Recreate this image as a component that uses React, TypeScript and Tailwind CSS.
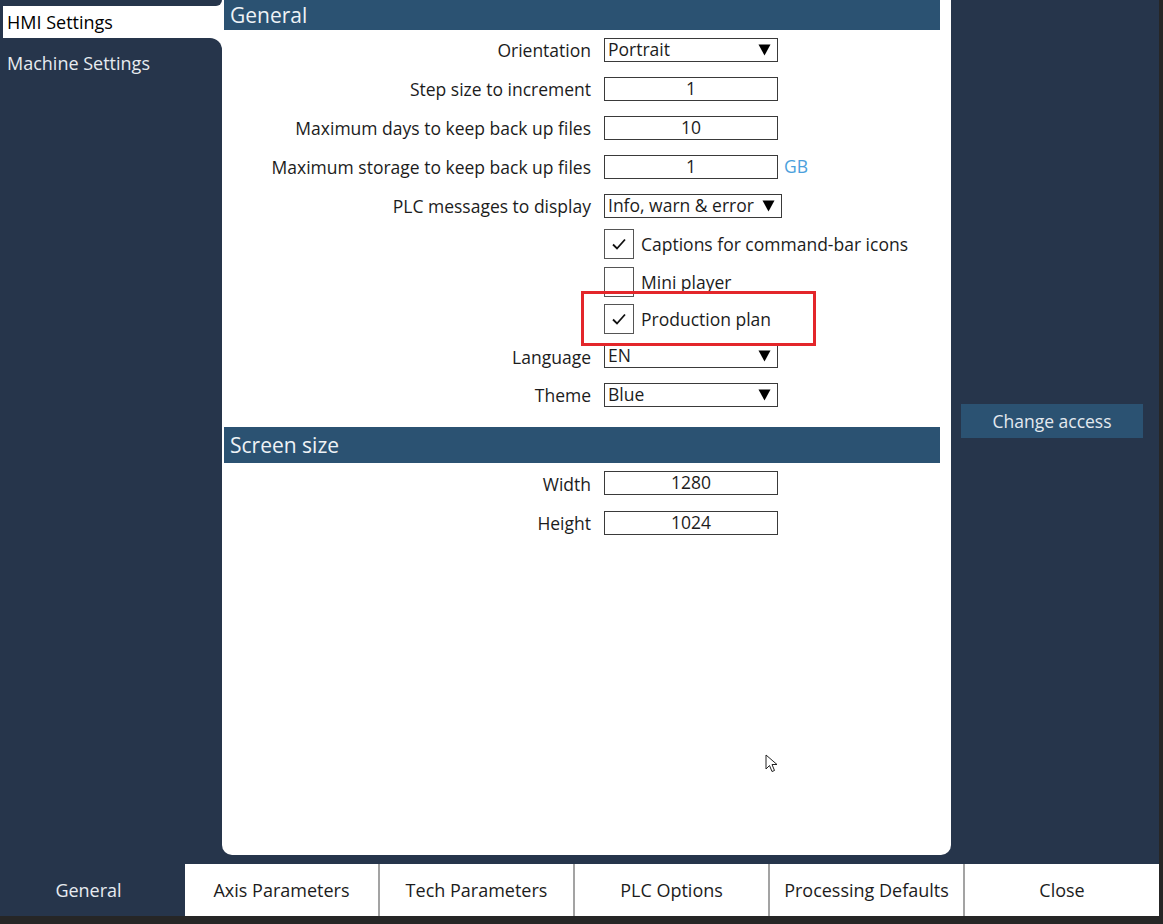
import React from 'react';

const FONT = "font-['Open_Sans',_'Noto_Sans',_sans-serif]";

const Arrow = () => (
  <svg width="13" height="12" viewBox="0 0 13 12">
    <path d="M0.5 0.5 L12.5 0.5 L6.5 11.5 Z" fill="#000" />
  </svg>
);

const Select: React.FC<{ value: string; wide?: boolean }> = ({ value, wide }) => (
  <div className={`flex items-center justify-between h-[24px] ${wide ? 'w-[178px]' : 'w-[174px]'} border border-[#3a3a3a] bg-white pl-[3px] pr-[6px]`}>
    <span className="leading-none">{value}</span>
    <Arrow />
  </div>
);

const Input: React.FC<{ value: string }> = ({ value }) => (
  <div className="flex items-center justify-center h-[24px] w-[174px] border border-[#3a3a3a] bg-white">
    <span className="leading-none">{value}</span>
  </div>
);

const Check: React.FC<{ label: string; checked: boolean }> = ({ label, checked }) => (
  <div className="flex items-center gap-[7px]">
    <div className="flex items-center justify-center w-[30px] h-[30px] border border-[#555] bg-white">
      {checked && (
        <svg width="16" height="14" viewBox="0 0 16 14">
          <path d="M2 7.5 L6 11.5 L14 2.5" fill="none" stroke="#111" strokeWidth="1.8" />
        </svg>
      )}
    </div>
    <span>{label}</span>
  </div>
);

type Row = { label?: string; h: string; control: React.ReactNode };

const generalRows: Row[] = [
  { label: 'Orientation', h: 'h-[39px]', control: <Select value="Portrait" /> },
  { label: 'Step size to increment', h: 'h-[39px]', control: <Input value="1" /> },
  { label: 'Maximum days to keep back up files', h: 'h-[39px]', control: <Input value="10" /> },
  {
    label: 'Maximum storage to keep back up files',
    h: 'h-[39px]',
    control: (
      <div className="flex items-center gap-[6px]">
        <Input value="1" />
        <span className="text-[#4b9fdc]">GB</span>
      </div>
    ),
  },
  { label: 'PLC messages to display', h: 'h-[39px]', control: <Select value="Info, warn & error" wide /> },
  { h: 'h-[38px]', control: <Check label="Captions for command-bar icons" checked /> },
  { h: 'h-[38px]', control: <Check label="Mini player" checked={false} /> },
  { h: 'h-[36px]', control: <Check label="Production plan" checked /> },
  { label: 'Language', h: 'h-[38px]', control: <Select value="EN" /> },
  { label: 'Theme', h: 'h-[39px]', control: <Select value="Blue" /> },
];

const screenRows: Row[] = [
  { label: 'Width', h: 'h-[40px]', control: <Input value="1280" /> },
  { label: 'Height', h: 'h-[39px]', control: <Input value="1024" /> },
];

const FormRows: React.FC<{ rows: Row[] }> = ({ rows }) => (
  <div className="flex flex-col">
    {rows.map((r, i) => (
      <div key={i} className={`flex items-center pt-[2px] ${r.h}`}>
        <div className="w-[369px] text-right">{r.label}</div>
        <div className="ml-[13px] -mt-[2px]">{r.control}</div>
      </div>
    ))}
  </div>
);

const tabs = ['Axis Parameters', 'Tech Parameters', 'PLC Options', 'Processing Defaults'];

export default function App() {
  return (
    <div className={`${FONT} w-[1163px] h-[924px] flex flex-col bg-[#262626] text-[17.5px] text-[#1c1c1c] overflow-hidden`}>
      <div className="flex w-[1159px] h-[916px] flex-col bg-[#26354b]">
        <div className="flex h-[864px]">
          {/* Sidebar */}
          <div className="w-[222px] flex">
            <div className="w-[3px] bg-[#26354b]" />
            <div className="flex-1 flex flex-col bg-white">
              <div className="h-[6px] bg-[#26354b] rounded-br-[10px]" />
              <div className="h-[32px] flex items-center pl-[4px] text-[18px] text-black">HMI Settings</div>
              <div className="flex-1 -ml-[3px] bg-[#26354b] rounded-tr-[12px] pl-[7px] pt-[12px] text-[18px] text-[#e6ebf0]">
                Machine Settings
              </div>
            </div>
          </div>

          {/* Main panel */}
          <div className="relative w-[729px] h-[855px] bg-white rounded-b-[10px]">
            <div className="ml-[2px] w-[716px] h-[30px] bg-[#2b5272] flex items-center pl-[6px] text-[21px] text-[#eef2f6] leading-none">
              General
            </div>
            <FormRows rows={generalRows} />
            <div className="mt-[13px] ml-[2px] w-[716px] h-[36px] bg-[#2b5272] flex items-center pl-[6px] text-[21px] text-[#eef2f6] leading-none">
              Screen size
            </div>
            <FormRows rows={screenRows} />

            {/* annotation */}
            <div className="absolute left-[359px] top-[291px] w-[235px] h-[55px] border-[3px] border-[#e3262a]" />

            {/* mouse cursor */}
            <svg className="absolute left-[543px] top-[754px]" width="14" height="20" viewBox="0 0 14 20">
              <path d="M1 1 L1 15 L4.5 11.5 L7 17.5 L9.5 16.5 L7 10.5 L12 10.5 Z" fill="white" stroke="#222" strokeWidth="1" />
            </svg>
          </div>

          {/* Right column */}
          <div className="flex-1 pl-[10px] pt-[404px]">
            <div className="w-[182px] h-[34px] bg-[#2b5272] flex items-center justify-center text-[17.5px] text-[#e3e9ef]">
              Change access
            </div>
          </div>
        </div>

        {/* Bottom tabs */}
        <div className="flex h-[52px] text-[18px]">
          <div className="w-[185px] flex items-center justify-center pr-[8px] text-[#e6ebf0] bg-[#26354b]">General</div>
          {tabs.map((t) => (
            <div key={t} className="w-[195px] flex items-center justify-center bg-white border-r-2 border-[#a3a3a3] text-[#1c1c1c]">
              {t}
            </div>
          ))}
          <div className="flex-1 flex items-center justify-center bg-white text-[#1c1c1c]">Close</div>
        </div>
      </div>
    </div>
  );
}
